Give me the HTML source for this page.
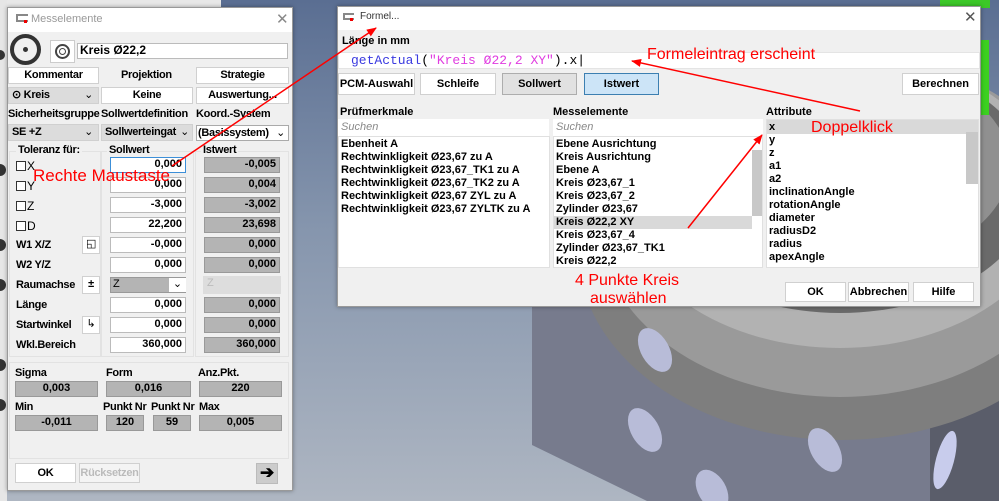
<!DOCTYPE html>
<html><head><meta charset="utf-8"><style>
*{box-sizing:border-box;margin:0;padding:0}
body{width:999px;height:501px;overflow:hidden;position:relative;font-family:"Liberation Sans",sans-serif;font-size:11px;font-weight:bold;color:#000;background:linear-gradient(180deg,#5a6e92 0%,#8595ad 45%,#aeb6c2 100%)}
.a{position:absolute}
.dlg{position:absolute;background:#f0f0f0;border:1px solid #999;box-shadow:0 0 4px rgba(0,0,0,.35)}
.tb{position:absolute;left:0;right:0;top:0;height:24px;background:#fff;font-weight:normal;color:#999}
.btn{position:absolute;background:#fff;border:1px solid #d0d0d0;text-align:center;line-height:14px;white-space:nowrap;overflow:hidden}
.inp{position:absolute;background:#fff;border:1px solid #bbb;text-align:right;padding-right:3px;line-height:13px;height:16px}
.ist{position:absolute;background:#b4b4b4;border:1px solid #999;text-align:right;padding-right:3px;line-height:13px;height:16px}
.cen{text-align:center;padding:0}
.lbl{position:absolute;white-space:nowrap}
.L .lbl,.L .btn{letter-spacing:-0.3px}
.cb{display:inline-block;width:10px;height:10px;border:1px solid #333;background:#fff;vertical-align:-1px;margin-right:1px}
.red{position:absolute;color:#f00;font-weight:normal;white-space:nowrap}
.list{position:absolute;background:#fff;border:1px solid #e0e0e0;font-size:11px;line-height:13px;padding:1px 2px;white-space:nowrap;overflow:hidden}
.sch{position:absolute;background:#fff;font-style:italic;font-weight:normal;color:#888;padding-left:3px;line-height:16px;height:17px}
</style></head><body>
<svg class="a" style="left:0;top:0" width="999" height="501">
<rect x="0" y="0" width="221" height="7" fill="#e8e8e8"/>
<rect x="0" y="0" width="7" height="501" fill="#e6e6e6"/>
<circle cx="0" cy="55" r="5" fill="#333"/><circle cx="0" cy="170" r="6" fill="#333"/><circle cx="0" cy="245" r="6" fill="#333"/><circle cx="0" cy="285" r="6" fill="#333"/><circle cx="0" cy="365" r="6" fill="#333"/><circle cx="0" cy="405" r="6" fill="#333"/>
<polygon points="532,300 999,300 999,501 647,501 532,445" fill="#777b8d"/>
<polygon points="930,400 999,360 999,501 930,501" fill="#5a5d6a"/>
<ellipse cx="840" cy="250" rx="262" ry="190" fill="#7e7e7e"/>
<ellipse cx="840" cy="225" rx="240" ry="172" fill="#9a9a9a"/>
<ellipse cx="840" cy="200" rx="215" ry="148" fill="#b2b2b2"/>
<ellipse cx="840" cy="185" rx="195" ry="128" fill="#6a6a6a"/>
<ellipse cx="840" cy="165" rx="170" ry="105" fill="#909090"/>
<ellipse cx="655" cy="350" rx="14" ry="24" fill="#b8bcd8" transform="rotate(-30 655 350)"/>
<ellipse cx="645" cy="430" rx="14" ry="24" fill="#b8bcd8" transform="rotate(-30 645 430)"/>
<ellipse cx="712" cy="490" rx="14" ry="22" fill="#b8bcd8" transform="rotate(-30 712 490)"/>
<ellipse cx="825" cy="450" rx="14" ry="24" fill="#b8bcd8" transform="rotate(-30 825 450)"/>
<ellipse cx="945" cy="460" rx="9" ry="30" fill="#c8ccec" transform="rotate(15 945 460)"/>
<rect x="940" y="0" width="50" height="8" fill="#3cc828"/>
<rect x="981" y="40" width="8" height="75" fill="#3cd020"/>
</svg>

<div class="L">
<div class="dlg" style="left:7px;top:7px;width:286px;height:484px">
 <div class="tb"><span class="a" style="left:8px;top:6px;width:12px;height:8px;border:2px solid #888;border-right:none"></span><span class="a" style="left:16px;top:12px;width:3px;height:3px;background:#e00"></span><span class="a" style="left:23px;top:5px">Messelemente</span><span class="a" style="left:268px;top:2px;font-size:15px;color:#888">✕</span></div>
</div>
<div class="a" style="left:10px;top:34px;width:31px;height:31px;border:4px solid #333;border-radius:50%"></div>
<div class="a" style="left:23px;top:47px;width:5px;height:5px;background:#333;border-radius:50%"></div>
<div class="a" style="left:50px;top:40px;width:25px;height:23px;background:#fff;border:1px solid #ccc"></div>
<div class="a" style="left:55px;top:44px;width:15px;height:15px;border:2px solid #444;border-radius:50%"></div>
<div class="a" style="left:59px;top:48px;width:7px;height:7px;border:1px solid #444;border-radius:50%"></div>
<div class="inp" style="left:77px;top:43px;width:211px;text-align:left;padding-left:2px;font-size:12px">Kreis Ø22,2</div>
<div class="btn" style="left:8px;top:67px;width:91px;height:17px">Kommentar</div>
<div class="lbl" style="left:121px;top:69px">Projektion</div>
<div class="btn" style="left:196px;top:67px;width:93px;height:17px">Strategie</div>
<div class="btn" style="left:8px;top:87px;width:91px;height:17px;background:#dcdcdc;text-align:left;padding-left:3px">⊙ Kreis<span class="a" style="right:5px;top:0;font-weight:normal">⌄</span></div>
<div class="btn" style="left:101px;top:87px;width:92px;height:17px">Keine</div>
<div class="btn" style="left:196px;top:87px;width:93px;height:17px">Auswertung...</div>
<div class="lbl" style="left:8px;top:108px">Sicherheitsgruppe</div>
<div class="lbl" style="left:101px;top:108px">Sollwertdefinition</div>
<div class="lbl" style="left:196px;top:108px">Koord.-System</div>
<div class="btn" style="left:8px;top:124px;width:91px;height:17px;background:#dcdcdc;text-align:left;padding-left:3px">SE +Z<span class="a" style="right:5px;top:0;font-weight:normal">⌄</span></div>
<div class="btn" style="left:101px;top:124px;width:92px;height:17px;background:#dcdcdc;text-align:left;padding-left:3px">Sollwerteingat<span class="a" style="right:3px;top:0;font-weight:normal">⌄</span></div>
<div class="btn" style="left:196px;top:125px;width:93px;height:16px;border-color:#aaa;text-align:left;padding-left:1px">(Basissystem)<span class="a" style="right:3px;top:0;font-weight:normal">⌄</span></div>
<div class="a" style="left:9px;top:151px;width:92px;height:206px;border:1px solid #e2e2e2"></div>
<div class="a" style="left:101px;top:151px;width:93px;height:206px;border:1px solid #e2e2e2"></div>
<div class="a" style="left:195px;top:151px;width:94px;height:206px;border:1px solid #e2e2e2"></div>
<div class="lbl" style="left:16px;top:144px;background:#f0f0f0;padding:0 2px">Toleranz für:</div>
<div class="lbl" style="left:107px;top:144px;background:#f0f0f0;padding:0 2px">Sollwert</div>
<div class="lbl" style="left:201px;top:144px;background:#f0f0f0;padding:0 2px">Istwert</div>

<div class="lbl" style="left:16px;top:159px;font-weight:normal;font-size:12px"><span class="cb"></span>X</div>
<div class="lbl" style="left:16px;top:179px;font-weight:normal;font-size:12px"><span class="cb"></span>Y</div>
<div class="lbl" style="left:16px;top:199px;font-weight:normal;font-size:12px"><span class="cb"></span>Z</div>
<div class="lbl" style="left:16px;top:219px;font-weight:normal;font-size:12px"><span class="cb"></span>D</div>
<div class="lbl" style="left:16px;top:239px">W1 X/Z</div>
<div class="lbl" style="left:16px;top:259px">W2 Y/Z</div>
<div class="lbl" style="left:16px;top:279px">Raumachse</div>
<div class="lbl" style="left:16px;top:299px">Länge</div>
<div class="lbl" style="left:16px;top:319px">Startwinkel</div>
<div class="lbl" style="left:16px;top:339px">Wkl.Bereich</div>
<div class="btn" style="left:82px;top:236px;width:18px;height:18px;font-weight:normal">◱</div>
<div class="btn" style="left:82px;top:276px;width:18px;height:18px">±</div>
<div class="btn" style="left:82px;top:316px;width:18px;height:18px;font-weight:normal">↳</div>

<div class="inp" style="left:110px;top:157px;width:76px;border-color:#3c8fd8">0,000</div>
<div class="inp" style="left:110px;top:177px;width:76px">0,000</div>
<div class="inp" style="left:110px;top:197px;width:76px">-3,000</div>
<div class="inp" style="left:110px;top:217px;width:76px">22,200</div>
<div class="inp" style="left:110px;top:237px;width:76px">-0,000</div>
<div class="inp" style="left:110px;top:257px;width:76px">0,000</div>
<div class="ist" style="left:110px;top:277px;width:76px;text-align:left;padding-left:2px;font-weight:normal">Z<span class="a" style="left:58px;top:0;width:17px;height:14px;background:#fff;text-align:center">⌄</span></div>
<div class="inp" style="left:110px;top:297px;width:76px">0,000</div>
<div class="inp" style="left:110px;top:317px;width:76px">0,000</div>
<div class="inp" style="left:110px;top:337px;width:76px">360,000</div>

<div class="ist" style="left:204px;top:157px;width:76px">-0,005</div>
<div class="ist" style="left:204px;top:177px;width:76px">0,004</div>
<div class="ist" style="left:204px;top:197px;width:76px">-3,002</div>
<div class="ist" style="left:204px;top:217px;width:76px">23,698</div>
<div class="ist" style="left:204px;top:237px;width:76px">0,000</div>
<div class="ist" style="left:204px;top:257px;width:76px">0,000</div>
<div class="ist" style="left:203px;top:276px;width:78px;height:18px;background:#ddd;border-color:#ddd;color:#bbb;text-align:left;padding-left:3px;font-weight:normal">Z</div>
<div class="ist" style="left:204px;top:297px;width:76px">0,000</div>
<div class="ist" style="left:204px;top:317px;width:76px">0,000</div>
<div class="ist" style="left:204px;top:337px;width:76px">360,000</div>

<div class="a" style="left:9px;top:362px;width:280px;height:97px;border:1px solid #e2e2e2"></div>
<div class="lbl" style="left:15px;top:367px">Sigma</div>
<div class="lbl" style="left:106px;top:367px">Form</div>
<div class="lbl" style="left:198px;top:367px">Anz.Pkt.</div>
<div class="ist cen" style="left:15px;top:381px;width:83px">0,003</div>
<div class="ist cen" style="left:106px;top:381px;width:85px">0,016</div>
<div class="ist cen" style="left:199px;top:381px;width:83px">220</div>
<div class="lbl" style="left:15px;top:401px">Min</div>
<div class="lbl" style="left:103px;top:401px">Punkt Nr</div>
<div class="lbl" style="left:151px;top:401px">Punkt Nr</div>
<div class="lbl" style="left:199px;top:401px">Max</div>
<div class="ist cen" style="left:15px;top:415px;width:83px">-0,011</div>
<div class="ist cen" style="left:106px;top:415px;width:38px">120</div>
<div class="ist cen" style="left:153px;top:415px;width:38px">59</div>
<div class="ist cen" style="left:199px;top:415px;width:83px">0,005</div>
<div class="btn" style="left:15px;top:463px;width:61px;height:20px;line-height:18px">OK</div>
<div class="btn" style="left:79px;top:463px;width:61px;height:20px;line-height:18px;color:#bbb;background:#f4f4f4">Rücksetzen</div>
<div class="btn" style="left:256px;top:463px;width:22px;height:21px;background:#ccc;border-color:#bbb;font-size:17px;line-height:18px">➔</div>
</div>

<div class="dlg" style="left:337px;top:6px;width:644px;height:301px">
 <div class="tb" style="height:23px"><span class="a" style="left:5px;top:6px;width:11px;height:7px;border:2px solid #888;border-right:none"></span><span class="a" style="left:12px;top:11px;width:3px;height:3px;background:#e00"></span><span class="a" style="left:22px;top:4px;color:#333;font-size:10px">Formel...</span><span class="a" style="left:626px;top:1px;font-size:15px;color:#555">✕</span></div>
</div>
<div class="lbl" style="left:342px;top:35px">Länge in mm</div>
<div class="a" style="left:338px;top:52px;width:642px;height:17px;background:#fff;border:1px solid #e4e4e4;font-family:'Liberation Mono',monospace;font-weight:normal;font-size:13px;line-height:15px;padding-left:12px;white-space:nowrap"><span style="color:#3a3ae0">getActual</span>(<span style="color:#e03ce0">"Kreis Ø22,2 XY"</span>).x|</div>
<div class="btn" style="left:338px;top:73px;width:77px;height:22px;line-height:20px">PCM-Auswahl</div>
<div class="btn" style="left:420px;top:73px;width:76px;height:22px;line-height:20px">Schleife</div>
<div class="btn" style="left:502px;top:73px;width:75px;height:22px;line-height:20px;background:#e1e1e1;border-color:#adadad">Sollwert</div>
<div class="btn" style="left:584px;top:73px;width:75px;height:22px;line-height:20px;background:#cce4f7;border-color:#3c7fb1">Istwert</div>
<div class="btn" style="left:902px;top:73px;width:77px;height:22px;line-height:20px">Berechnen</div>
<div class="lbl" style="left:340px;top:106px">Prüfmerkmale</div>
<div class="lbl" style="left:553px;top:106px">Messelemente</div>
<div class="lbl" style="left:766px;top:106px">Attribute</div>
<div class="sch" style="left:338px;top:119px;width:211px">Suchen</div>
<div class="sch" style="left:553px;top:119px;width:210px">Suchen</div>
<div class="list" style="left:338px;top:136px;width:212px;height:132px">Ebenheit A<br>Rechtwinkligkeit Ø23,67 zu A<br>Rechtwinkligkeit Ø23,67_TK1 zu A<br>Rechtwinkligkeit Ø23,67_TK2 zu A<br>Rechtwinkligkeit Ø23,67 ZYL zu A<br>Rechtwinkligkeit Ø23,67 ZYLTK zu A</div>
<div class="list" style="left:553px;top:136px;width:210px;height:132px">Ebene Ausrichtung<br>Kreis Ausrichtung<br>Ebene A<br>Kreis Ø23,67_1<br>Kreis Ø23,67_2<br>Zylinder Ø23,67<br><span style="display:block;background:#d9d9d9;margin:0 -2px;padding-left:2px;width:198px">Kreis Ø22,2 XY</span>Kreis Ø23,67_4<br>Zylinder Ø23,67_TK1<br>Kreis Ø22,2</div>
<div class="a" style="left:752px;top:150px;width:10px;height:66px;background:#c8c8c8"></div>
<div class="list" style="left:766px;top:119px;width:213px;height:149px;padding-top:2px"><span style="display:block;background:#d9d9d9;margin:-2px -2px 0;padding:1px 2px 0">x</span>y<br>z<br>a1<br>a2<br>inclinationAngle<br>rotationAngle<br>diameter<br>radiusD2<br>radius<br>apexAngle</div>
<div class="a" style="left:966px;top:132px;width:12px;height:52px;background:#c8c8c8"></div>
<div class="btn" style="left:785px;top:282px;width:61px;height:20px;line-height:18px">OK</div>
<div class="btn" style="left:848px;top:282px;width:61px;height:20px;line-height:18px">Abbrechen</div>
<div class="btn" style="left:913px;top:282px;width:61px;height:20px;line-height:18px">Hilfe</div>

<div class="red" style="left:33px;top:166px;font-size:17px">Rechte Maustaste</div>
<div class="red" style="left:647px;top:46px;font-size:16px">Formeleintrag erscheint</div>
<div class="red" style="left:811px;top:119px;font-size:16px">Doppelklick</div>
<div class="red" style="left:575px;top:272px;font-size:16px">4 Punkte Kreis</div>
<div class="red" style="left:590px;top:290px;font-size:16px">auswählen</div>
<svg class="a" style="left:0;top:0" width="999" height="501">
<defs><marker id="m" markerWidth="10" markerHeight="8" refX="9" refY="4" orient="auto" markerUnits="userSpaceOnUse"><path d="M0,0 L10,4 L0,8 z" fill="#f00"/></marker></defs>
<g stroke="#f00" stroke-width="1.5" fill="none">
<line x1="172" y1="166" x2="376" y2="28" marker-end="url(#m)"/>
<line x1="860" y1="111" x2="632" y2="61" marker-end="url(#m)"/>
<line x1="688" y1="228" x2="762" y2="135" marker-end="url(#m)"/>
</g></svg>
</body></html>
